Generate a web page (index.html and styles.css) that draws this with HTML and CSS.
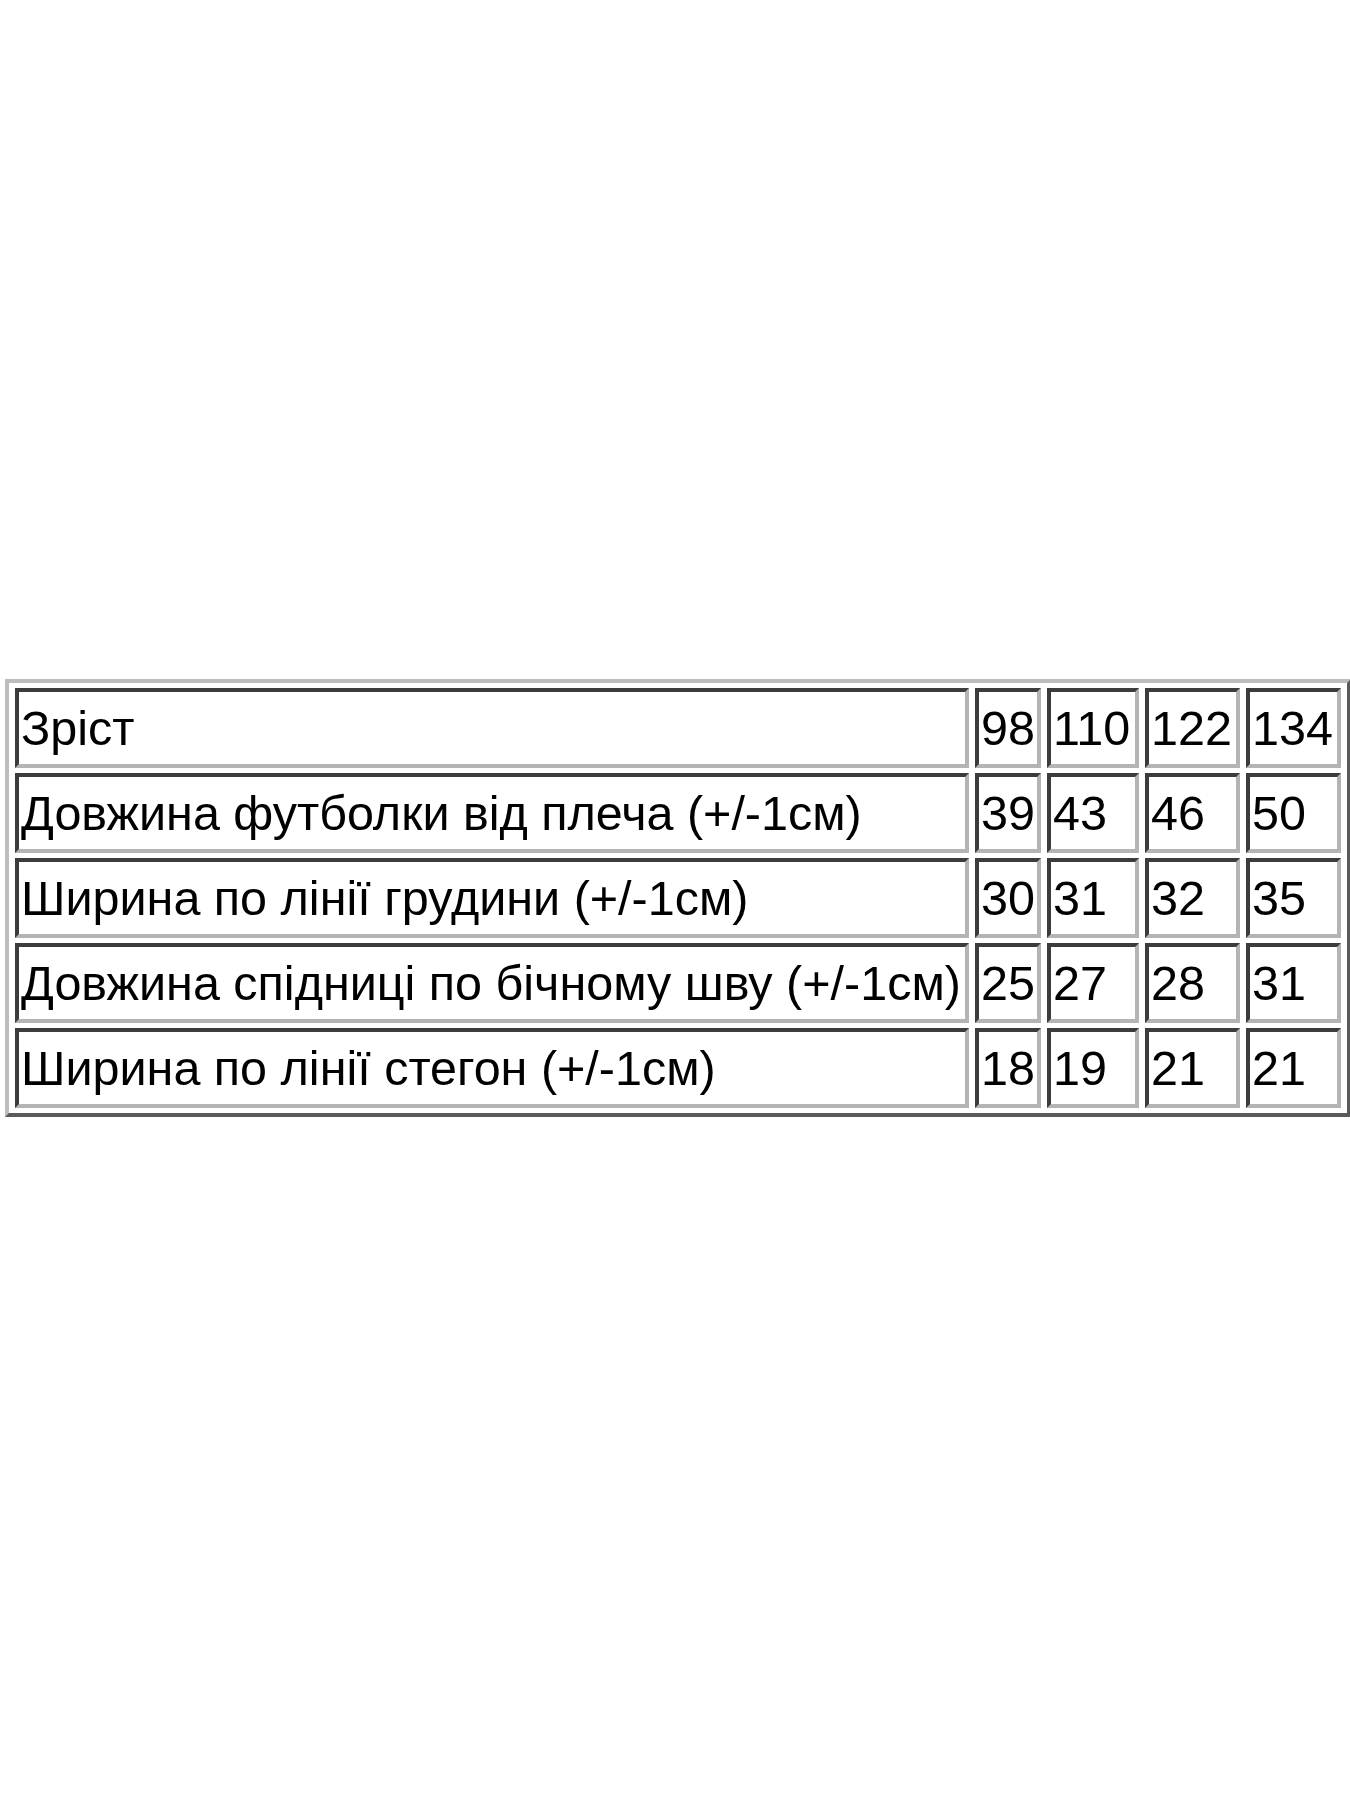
FILE: index.html
```html
<!DOCTYPE html>
<html lang="uk">
<head>
<meta charset="utf-8">
<title>Розмірна сітка</title>
<link rel="stylesheet" href="styles.css">
</head>
<body>
<div class="page">
  <table class="sizes">
    <colgroup>
      <col class="w-label"><col class="w1"><col class="w2"><col class="w3"><col class="w4">
    </colgroup>
    <tr><td>Зріст</td><td>98</td><td>110</td><td>122</td><td>134</td></tr>
    <tr><td>Довжина футболки від плеча (+/-1см)</td><td>39</td><td>43</td><td>46</td><td>50</td></tr>
    <tr><td>Ширина по лінії грудини (+/-1см)</td><td>30</td><td>31</td><td>32</td><td>35</td></tr>
    <tr><td>Довжина спідниці по бічному шву (+/-1см)</td><td>25</td><td>27</td><td>28</td><td>31</td></tr>
    <tr><td>Ширина по лінії стегон (+/-1см)</td><td>18</td><td>19</td><td>21</td><td>21</td></tr>
  </table>
</div>
</body>
</html>
```
FILE: styles.css
```css
html, body {
  margin: 0;
  padding: 0;
  background: #ffffff;
}

.page {
  padding: 679px 0 0 5px;
}

.sizes {
  width: 1344px;
  border-collapse: separate;
  border-spacing: 6px 5px;
  border-style: solid;
  border-width: 4px;
  border-color: #bdbdbd #5a5a5a #5a5a5a #bdbdbd;
  font-family: "Liberation Sans", Arial, sans-serif;
  font-size: 48.5px;
  color: #000000;
  table-layout: fixed;
}

.w-label { width: 954px; }
.w1 { width: 66px; }
.w2 { width: 92px; }
.w3 { width: 95px; }
.w4 { width: 95px; }

.sizes td {
  box-sizing: border-box;
  height: 80px;
  padding: 6px 0 6px 2px;
  border-style: solid;
  border-width: 4px;
  border-color: #3c3c3c #b4b4b4 #b4b4b4 #3c3c3c;
  white-space: nowrap;
  vertical-align: middle;
  line-height: 60px;
  overflow: hidden;
}
```
